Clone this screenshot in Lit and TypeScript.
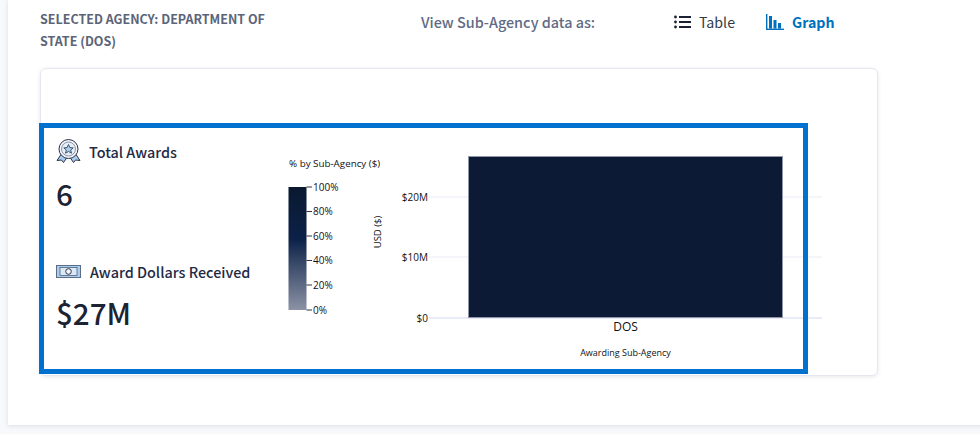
import { LitElement, html, css, svg } from "lit";
import { customElement } from "lit/decorators.js";

const yTicks = [
    { label: "$20M", y: 47 },
    { label: "$10M", y: 107 },
    { label: "$0", y: 168 },
];

const legendTicks = [
    { label: "100%", y: 37 },
    { label: "80%", y: 61.5 },
    { label: "60%", y: 86 },
    { label: "40%", y: 110.5 },
    { label: "20%", y: 135 },
    { label: "0%", y: 160 },
];

@customElement("app-root")
export class AppRoot extends LitElement {
    static styles = css`
    :host {
      display: block;
      width: 980px;
      height: 434px;
      overflow: hidden;
      background: #f8f9fb;
      font-family: "Noto Sans CJK SC", "Noto Sans", sans-serif;
    }

    .panel {
      box-sizing: border-box;
      margin-left: 8px;
      width: 990px;
      height: 425px;
      padding: 8px 0 0 32px;
      background: #ffffff;
      box-shadow: 0 1px 5px rgba(90, 100, 130, 0.18);
    }

    .top {
      display: flex;
      align-items: flex-start;
      height: 60px;
    }

    .agency {
      flex: none;
      width: 240px;
      margin: 0;
      font-size: 12.5px;
      font-weight: 700;
      line-height: 22px;
      color: #5b6478;
    }

    .view-label {
      flex: none;
      margin: 3px 0 0 141px;
      width: 253px;
      font-size: 14.4px;
      font-weight: 500;
      line-height: 22px;
      color: #5f6b85;
    }

    .opt {
      display: flex;
      align-items: center;
      gap: 8px;
      margin-top: 3px;
      font-size: 14.2px;
      line-height: 22px;
      color: #323a45;
    }

    .opt.active {
      margin-left: 31px;
      font-weight: 600;
      color: #0071bc;
    }

    .card {
      box-sizing: border-box;
      width: 838px;
      height: 308px;
      padding-top: 54px;
      border: 1px solid #e4e7f0;
      border-radius: 6px;
      box-shadow: 0 1px 4px rgba(90, 100, 130, 0.14);
    }

    .focus {
      position: relative;
      box-sizing: border-box;
      display: flex;
      width: 769px;
      height: 251px;
      margin-left: -2px;
      padding: 5px;
    }

    /* highlight frame sits above the chart, the grid lines run under it */
    .focus::after {
      content: "";
      position: absolute;
      inset: 0;
      border: 5px solid #0071ce;
      pointer-events: none;
    }

    .stats {
      flex: none;
      box-sizing: border-box;
      width: 240px;
      padding: 10px 0 0 12px;
    }

    .stat-head {
      display: flex;
      align-items: center;
      gap: 8px;
      height: 26px;
      font-size: 14.4px;
      font-weight: 500;
      color: #1f2a44;
    }

    .stat-value {
      margin-top: 8px;
      font-size: 29.6px;
      font-weight: 500;
      line-height: 44px;
      color: #1c2333;
    }

    .stat.dollars {
      margin-top: 42px;
    }

    .stat.dollars .stat-head {
      gap: 9px;
    }

    .stat.dollars .stat-value {
      margin-top: 7px;
    }

    .chart {
      display: block;
      flex: none;
      margin-top: 1px;
      overflow: visible;
    }

    .chart text {
      font-family: "Open Sans", sans-serif;
      fill: #111111;
    }
  `;

    private renderChart() {
        // coordinates are relative to the inner edge of the blue frame (44, 129)
        return html`
      <svg class="chart" width="519" height="240" viewBox="0 0 519 240">
        <defs>
          <linearGradient id="scale" x1="0" y1="0" x2="0" y2="1">
            <stop offset="0" stop-color="#0a1930"></stop>
            <stop offset="0.42" stop-color="#0c2148"></stop>
            <stop offset="1" stop-color="#8b92a5"></stop>
          </linearGradient>
        </defs>
        <text x="5" y="38" font-size="9.8">% by Sub-Agency ($)</text>
        <rect x="4.5" y="58" width="18" height="123" fill="url(#scale)"></rect>
        ${legendTicks.map(
            (t) => svg`
            <line x1="22.5" x2="28" y1=${t.y + 21} y2=${t.y + 21} stroke="#333"></line>
            <text x="29" y=${t.y + 24.5} font-size="10">${t.label}</text>`
        )}
        <text transform="translate(97 103) rotate(-90)" text-anchor="middle" font-size="9.5">USD ($)</text>
        ${yTicks.map(
            (t) => svg`
            <line x1="145" x2="538" y1=${t.y + 21} y2=${t.y + 21} stroke="#e9ecf6" stroke-width=${t.label === "$0" ? 2 : 1}></line>
            <text x="144" y=${t.y + 25} text-anchor="end" font-size="10">${t.label}</text>`
        )}
        <rect x="184.5" y="27.5" width="314" height="161" fill="#0c1a35" stroke="#8f96a8"></rect>
        <text x="341.5" y="202" text-anchor="middle" font-size="12">DOS</text>
        <text x="341.5" y="227" text-anchor="middle" font-size="9">Awarding Sub-Agency</text>
      </svg>
    `;
    }

    render() {
        return html`
      <div class="panel">
        <div class="top">
          <p class="agency">SELECTED AGENCY: DEPARTMENT OF STATE (DOS)</p>
          <div class="view-label">View Sub-Agency data as:</div>
          <div class="opt">
            <svg width="17" height="14" viewBox="0 0 17 14">
              <g fill="#1b2233">
                <circle cx="1.5" cy="2" r="1.4"></circle>
                <circle cx="1.5" cy="7" r="1.4"></circle>
                <circle cx="1.5" cy="12" r="1.4"></circle>
                <rect x="5" y="1" width="12" height="2"></rect>
                <rect x="5" y="6" width="12" height="2"></rect>
                <rect x="5" y="11" width="12" height="2"></rect>
              </g>
            </svg>
            Table
          </div>
          <div class="opt active">
            <svg width="18" height="16" viewBox="0 0 18 16">
              <g fill="#0071bc">
                <rect x="0" y="0" width="1.4" height="16"></rect>
                <rect x="0" y="14.6" width="18" height="1.4"></rect>
                <rect x="3" y="2" width="3" height="12.6"></rect>
                <rect x="7.5" y="6" width="3" height="8.6"></rect>
                <rect x="12" y="9" width="3" height="5.6"></rect>
              </g>
            </svg>
            Graph
          </div>
        </div>
        <div class="card">
          <div class="focus">
            <div class="stats">
              <div class="stat">
                <div class="stat-head">
                  <svg width="25" height="24" viewBox="0 0 25 24">
                    <path d="M6 14 L1 21.5 L5.5 21 L7.5 23.5 L11 18.5 Z M19 14 L24 21.5 L19.5 21 L17.5 23.5 L14 18.5 Z" fill="#a9cdf0" stroke="#2a3347"></path>
                    <circle cx="12.5" cy="10" r="9.5" fill="#f3f5f9" stroke="#2a3347"></circle>
                    <circle cx="12.5" cy="10" r="7" fill="#e6eef8" stroke="#8a95a8"></circle>
                    <path d="M12.5 5.5 L13.9 8.6 L17.2 8.9 L14.7 11 L15.5 14.2 L12.5 12.5 L9.5 14.2 L10.3 11 L7.8 8.9 L11.1 8.6 Z" fill="#a9cdf0" stroke="#2a3347" stroke-width="0.8"></path>
                  </svg>
                  Total Awards
                </div>
                <div class="stat-value">6</div>
              </div>
              <div class="stat dollars">
                <div class="stat-head">
                  <svg width="25" height="13" viewBox="0 0 25 13">
                    <rect x="0.5" y="0.5" width="24" height="12" fill="#a9cdf0" stroke="#5d6c85"></rect>
                    <rect x="4" y="2.5" width="17" height="8" fill="#dbe8f6" stroke="#44516a" stroke-width="0.7"></rect>
                    <circle cx="12.5" cy="6.5" r="2.8" fill="#f3f5f9" stroke="#2a3347"></circle>
                  </svg>
                  Award Dollars Received
                </div>
                <div class="stat-value">$27M</div>
              </div>
            </div>
            ${this.renderChart()}
          </div>
        </div>
      </div>
    `;
    }
}
